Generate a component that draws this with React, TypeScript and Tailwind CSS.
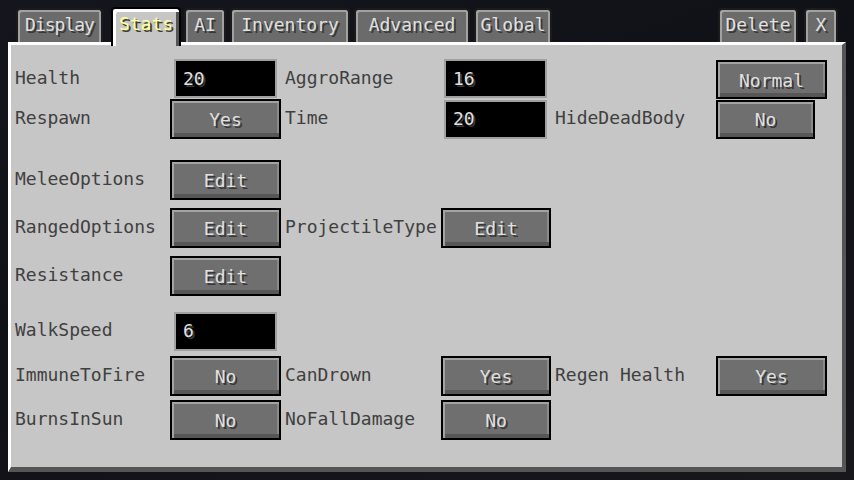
import React from 'react';

type TabProps = { label: string; className: string; active?: boolean };

const Tab: React.FC<TabProps> = ({ label, className, active }) =>
  active ? (
    <div
      className={`${className} relative z-10 -mt-[1px] h-[39px] shrink-0 rounded-t-[4px] border-2 border-b-0 border-black bg-[#c6c6c6] pt-[4px] text-center text-[18px] leading-[22px] text-[#ffffa0] shadow-[inset_3px_3px_0_#ffffff,inset_-3px_0_0_#555555] [text-shadow:2px_2px_0_#3f3f28]`}
    >
      {label}
    </div>
  ) : (
    <div
      className={`${className} h-[34px] shrink-0 rounded-t-[4px] border-2 border-b-0 border-[#1b1b1b] bg-[#6b6b6b] pt-[4px] text-center text-[18px] leading-[22px] text-[#e0e0e0] shadow-[inset_2px_2px_0_#a2a2a2,inset_-2px_0_0_#a2a2a2] [text-shadow:2px_2px_0_#383838]`}
    >
      {label}
    </div>
  );

const Btn: React.FC<{ label: string; className?: string }> = ({
  label,
  className = 'w-[111px] h-[40px]',
}) => (
  <div
    className={`${className} flex items-center justify-center border-2 border-black bg-[#6f6f6f] text-[18px] leading-none text-[#e0e0e0] shadow-[inset_2px_2px_0_#a3a3a3,inset_0_-4px_0_#575757,inset_-2px_0_0_#8a8a8a] [text-shadow:2px_2px_0_#383838]`}
  >
    <span className="pt-[2px]">{label}</span>
  </div>
);

const Field: React.FC<{ value: string; className?: string }> = ({ value, className = 'ml-[4px]' }) => (
  <div
    className={`${className} flex h-[39px] w-[103px] items-center border-2 border-[#a0a0a0] bg-black pl-[7px] text-[18px] leading-none text-[#e0e0e0] [text-shadow:2px_2px_0_#383838]`}
  >
    {value}
  </div>
);

const Label: React.FC<{ text?: string }> = ({ text }) => (
  <div className="whitespace-nowrap pb-[2px] text-[18px] leading-none text-[#404040]">{text}</div>
);

const Row: React.FC<{ className: string; children: React.ReactNode }> = ({ className, children }) => (
  <div className={`${className} grid h-[40px] grid-cols-[155px_115px_156px_114px_161px_111px] items-center`}>
    {children}
  </div>
);

export default function App() {
  return (
    <div className="h-[480px] w-[854px] overflow-hidden bg-[linear-gradient(160deg,#15151d_0%,#101017_45%,#17171c_100%)] pt-[8px] font-['DejaVu_Sans_Mono',monospace]">
      {/* tabs */}
      <div className="flex h-[34px] items-start pl-[16px]">
        <Tab label="Display" className="w-[87px] tracking-[-1px]" />
        <Tab label="Stats" className="ml-[8px] w-[70px]" active />
        <Tab label="AI" className="ml-[3px] w-[42px]" />
        <Tab label="Inventory" className="ml-[4px] w-[120px]" />
        <Tab label="Advanced" className="ml-[4px] w-[116px]" />
        <Tab label="Global" className="ml-[4px] w-[78px]" />
        <Tab label="Delete" className="ml-[166px] w-[80px]" />
        <Tab label="X" className="ml-[6px] w-[34px]" />
      </div>

      {/* panel */}
      <div className="ml-[8px] h-[430px] w-[838px] border-b-[5px] border-l-[3px] border-r-4 border-t-[3px] border-b-[#555555] border-l-white border-r-[#555555] border-t-white bg-[#c6c6c6] pl-[4px]">
        <Row className="mt-[13px]">
          <Label text="Health" />
          <Field value="20" />
          <Label text="AggroRange" />
          <Field value="16" className="ml-[3px]" />
          <div />
          <Btn label="Normal" className="mt-[2px] h-[39px] w-[111px] self-start" />
        </Row>
        <Row className="mt-[1px]">
          <Label text="Respawn" />
          <Btn label="Yes" />
          <Label text="Time" />
          <Field value="20" className="ml-[3px]" />
          <Label text="HideDeadBody" />
          <Btn label="No" className="h-[39px] w-[99px]" />
        </Row>
        <Row className="mt-[21px]">
          <Label text="MeleeOptions" />
          <Btn label="Edit" />
        </Row>
        <Row className="mt-[8px]">
          <Label text="RangedOptions" />
          <Btn label="Edit" />
          <Label text="ProjectileType" />
          <Btn label="Edit" className="h-[40px] w-[110px]" />
        </Row>
        <Row className="mt-[8px]">
          <Label text="Resistance" />
          <Btn label="Edit" />
        </Row>
        <Row className="mt-[15px]">
          <Label text="WalkSpeed" />
          <Field value="6" />
        </Row>
        <Row className="mt-[5px]">
          <Label text="ImmuneToFire" />
          <Btn label="No" />
          <Label text="CanDrown" />
          <Btn label="Yes" className="h-[40px] w-[110px]" />
          <Label text="Regen Health" />
          <Btn label="Yes" />
        </Row>
        <Row className="mt-[4px]">
          <Label text="BurnsInSun" />
          <Btn label="No" />
          <Label text="NoFallDamage" />
          <Btn label="No" className="h-[40px] w-[110px]" />
        </Row>
      </div>
    </div>
  );
}
